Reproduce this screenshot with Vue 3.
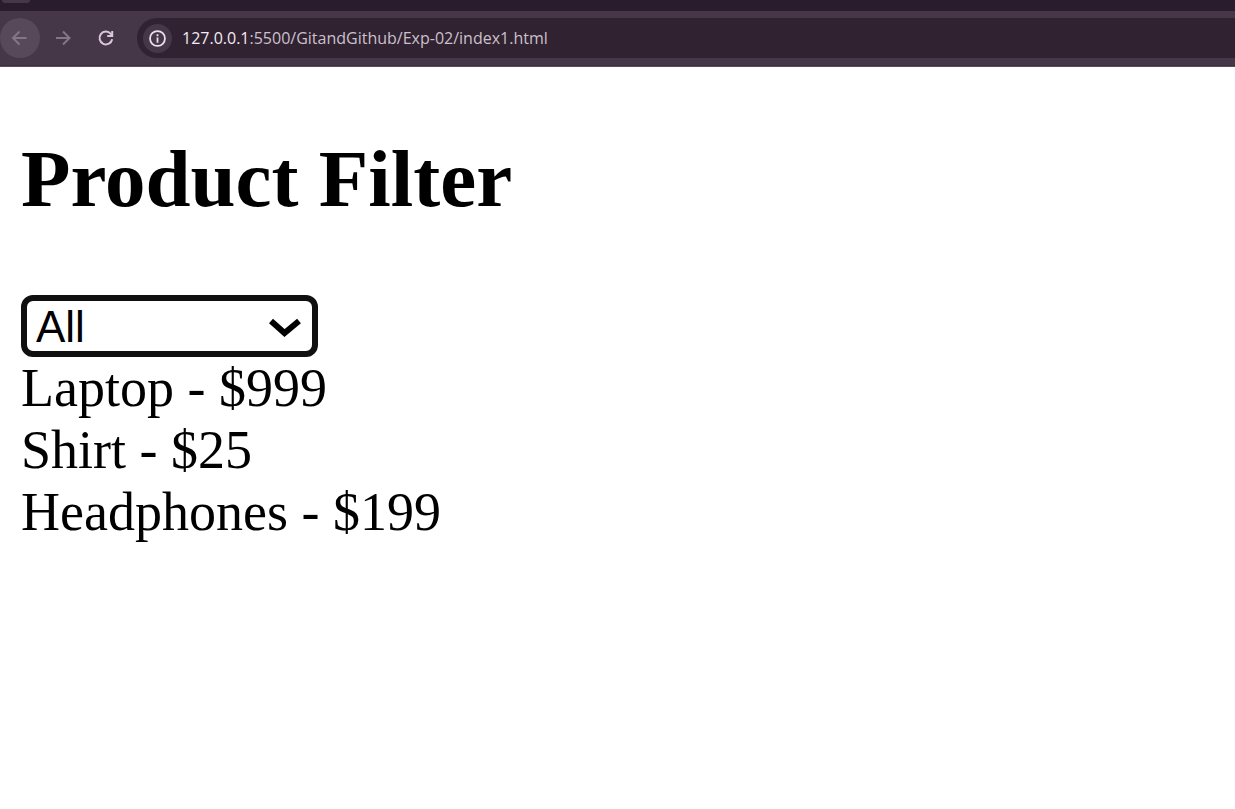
<script setup>
import { computed, ref } from 'vue'

const products = [
  { name: 'Laptop', price: 999, category: 'electronics' },
  { name: 'Shirt', price: 25, category: 'clothing' },
  { name: 'Headphones', price: 199, category: 'electronics' },
]
const category = ref('all')
const visible = computed(() =>
  products.filter((p) => category.value === 'all' || p.category === category.value),
)
</script>

<template>
  <div class="browser">
    <div class="tabs"><div class="tab"></div></div>
    <header class="toolbar">
      <button class="nav back" type="button" aria-label="Back">
        <svg viewBox="0 0 20 20"><path d="M16.5 10H3.5M9.5 3.5 3 10l6.5 6.5" /></svg>
      </button>
      <button class="nav forward" type="button" aria-label="Forward">
        <svg viewBox="0 0 20 20"><path d="M3 10h13M10 3.5l6.5 6.5-6.5 6.5" /></svg>
      </button>
      <button class="nav reload" type="button" aria-label="Reload">
        <svg viewBox="0 0 20 20">
          <path d="M16.2 11.3A6.4 6.4 0 1 1 14.8 5.8L16.5 7.5" />
          <path d="M16.2 3v5H11.2" />
        </svg>
      </button>
      <div class="address">
        <button class="info" type="button" aria-label="View site information">
          <svg viewBox="0 0 20 20">
            <circle cx="10" cy="10" r="7.1" />
            <path d="M10 9v5M10 6v1.8" />
          </svg>
        </button>
        <a class="url" href="#"><span class="host">127.0.0.1</span>:5500/GitandGithub/Exp-02/index1.html</a>
      </div>
    </header>
    <main class="page">
      <h2>Product Filter</h2>
      <div class="picker">
        <select v-model="category" aria-label="Category">
          <option value="all">All</option>
          <option value="electronics">Electronics</option>
          <option value="clothing">Clothing</option>
        </select>
        <svg class="chevron" viewBox="0 0 32 20" aria-hidden="true"><path d="M2 3 15.5 15 30 3" /></svg>
      </div>
      <div v-for="p in visible" :key="p.name" class="product">{{ p.name }} - ${{ p.price }}</div>
    </main>
  </div>
</template>

<style>
body {
  margin: 0;
  background: #fff;
}
</style>

<style scoped>
.tabs {
  height: 11px;
  background: #291c2c;
}
.tab {
  width: 28px;
  height: 3px;
  margin-left: 2px;
  border-radius: 0 0 12px 12px;
  background: #463748;
}
.toolbar {
  display: flex;
  align-items: center;
  box-sizing: border-box;
  height: 56px;
  padding-bottom: 1px;
  background: #463748;
  border-bottom: 1px solid #5a4a5b;
  box-shadow: inset 0 -1px #3e3040;
}
button {
  display: flex;
  align-items: center;
  justify-content: center;
  flex: none;
  padding: 0;
  border: 0;
  border-radius: 50%;
  background: none;
}
button svg {
  width: 20px;
  height: 20px;
  fill: none;
  stroke: currentColor;
  stroke-width: 2;
}
.nav {
  width: 40px;
  height: 40px;
  color: #857587;
}
.back {
  background: #574959;
}
.forward {
  margin-left: 3px;
}
.reload {
  margin-left: 3px;
  color: #dcc5df;
}
.address {
  display: flex;
  align-items: center;
  flex: 1;
  height: 40px;
  margin-left: 11px;
  padding-left: 6px;
  border-radius: 20px 0 0 20px;
  background: #302231;
}
.info {
  width: 29px;
  height: 29px;
  color: #ebdfeb;
  background: #463748;
}
.info svg {
  width: 21px;
  height: 21px;
  stroke-width: 1.7;
}
.url {
  margin-left: 10px;
  font: 16px/24px "Open Sans", "Noto Sans", sans-serif;
  color: #cbc0cb;
  text-decoration: none;
  white-space: nowrap;
}
.host {
  color: #f3eaf3;
}
.page {
  padding: 66px 21px 0;
  font-family: "Liberation Serif", "Times New Roman", serif;
  color: #000;
}
h2 {
  margin: 0 0 70px;
  font-size: 81px;
  line-height: 92px;
}
.picker {
  position: relative;
  width: 297px;
  height: 62px;
}
select {
  appearance: none;
  display: block;
  box-sizing: border-box;
  width: 100%;
  height: 100%;
  margin: 0;
  padding: 1px 56px 0 9px;
  border: 6px solid #101010;
  border-radius: 12px;
  outline: none;
  background: #fff;
  color: #000;
  font: 44px/50px "Liberation Sans", Arial, sans-serif;
}
.chevron {
  position: absolute;
  top: 23px;
  right: 17px;
  width: 32px;
  height: 20px;
  fill: none;
  stroke: #000;
  stroke-width: 6;
  pointer-events: none;
}
.product {
  font-size: 54px;
  line-height: 62px;
}
</style>
